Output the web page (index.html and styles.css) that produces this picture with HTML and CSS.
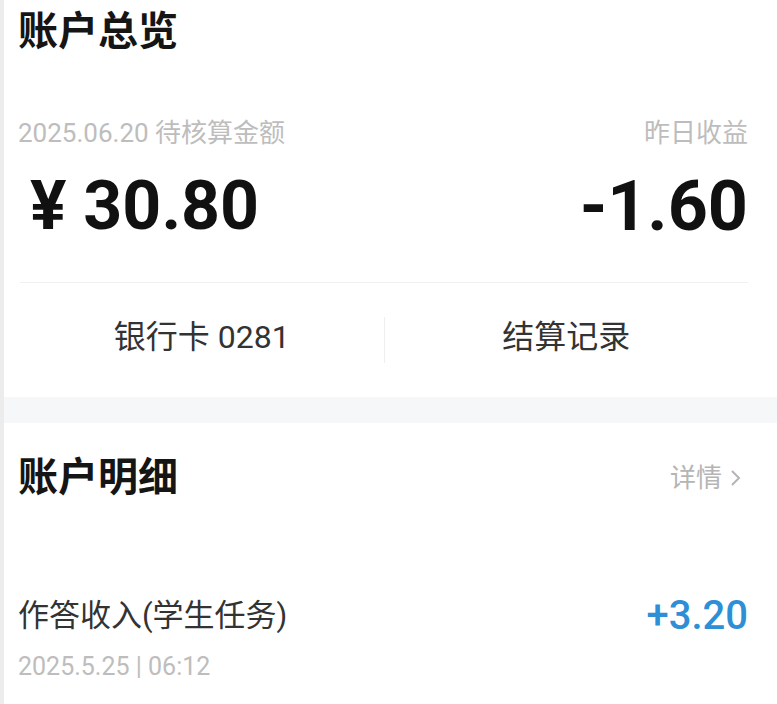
FILE: index.html
```html
<!DOCTYPE html>
<html lang="zh-CN">
<head>
  <meta charset="UTF-8">
  <meta name="viewport" content="width=device-width, initial-scale=1.0">
  <title>账户</title>
  <link rel="stylesheet" href="styles.css">
</head>
<body>
  <div class="page">
    <section class="card overview">
      <h2 class="card-title">账户总览</h2>
      <div class="stats">
        <div class="stat">
          <div class="stat-label">2025.06.20 待核算金额</div>
          <div class="stat-value indent">¥ 30.80</div>
        </div>
        <div class="stat right">
          <div class="stat-label">昨日收益</div>
          <div class="stat-value">-1.60</div>
        </div>
      </div>
      <div class="actions">
        <a class="action">银行卡 0281</a>
        <span class="action-sep"></span>
        <a class="action">结算记录</a>
      </div>
    </section>

    <section class="card detail">
      <div class="detail-head">
        <h2 class="card-title">账户明细</h2>
        <a class="more">详情<svg width="12" height="20" viewBox="0 0 12 20"><path d="M2 3l7 7-7 7" fill="none" stroke="#b5b5b5" stroke-width="2"/></svg></a>
      </div>
      <div class="record">
        <div class="record-main">
          <div class="record-name">作答收入(学生任务)</div>
          <div class="record-time">2025.5.25 | 06:12</div>
        </div>
        <div class="record-amount">+3.20</div>
      </div>
    </section>
  </div>
</body>
</html>
```

FILE: styles.css
```css
body { margin: 0; background: #f5f7f9; font-family: Roboto, "Noto Sans CJK SC", sans-serif; color: #111; }
.page { width: 777px; height: 704px; overflow: hidden; border-left: 4px solid #ececec; box-sizing: border-box; }
.card { background: #fff; padding: 0 29px 0 14px; }
.card-title { margin: 0; font-size: 40px; line-height: 40px; font-weight: 700; color: #151515; }

.overview { padding-top: 12px; height: 397px; box-sizing: border-box; }
.stats { display: flex; justify-content: space-between; margin-top: 68px; }
.stat-label { font-size: 26px; line-height: 26px; color: #bdbdbd; }
.stat-value { margin-top: 25px; font-size: 70px; line-height: 70px; font-weight: 700; color: #111; }
.stat-value.indent { padding-left: 12px; font-size: 68px; }
.stat.right { text-align: right; }
.actions { display: flex; align-items: center; height: 114px; margin-top: 41px; border-top: 1px solid #f0f1f3; margin-left: 2px; }
.action { flex: 1; text-align: center; font-size: 32px; line-height: 32px; color: #333; margin-top: -6px; }
.action-sep { width: 1px; height: 46px; background: #eeeeee; }

.detail { margin-top: 26px; padding-top: 35px; height: 281px; box-sizing: border-box; }
.detail-head { display: flex; justify-content: space-between; align-items: center; }
.more { display: flex; align-items: center; gap: 8px; margin-right: 6px; font-size: 26px; line-height: 26px; color: #b5b5b5; }
.record { display: flex; justify-content: space-between; align-items: flex-start; margin-top: 102px; }
.record-name { font-size: 31px; line-height: 32px; color: #333; }
.record-time { margin-top: 22px; font-size: 25px; line-height: 26px; color: #bdbdbd; }
.record-amount { font-size: 40px; line-height: 40px; font-weight: 500; color: #2f8fd6; margin-top: -4px; }
```
